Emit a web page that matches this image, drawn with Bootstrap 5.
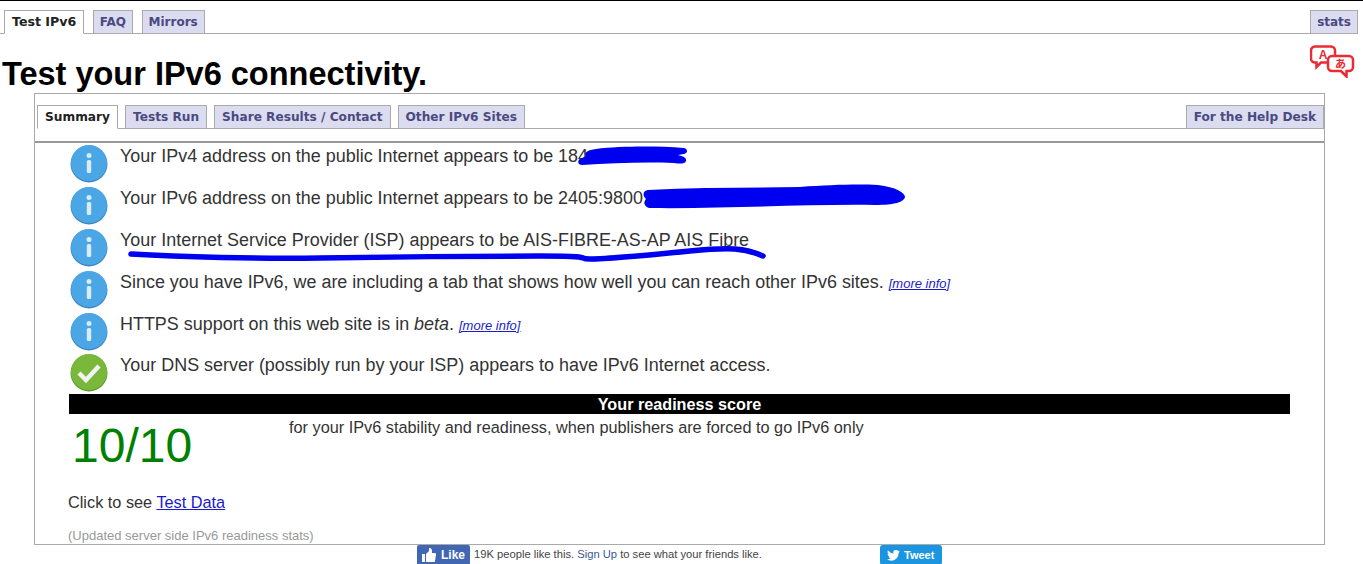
<!DOCTYPE html>
<html lang="en">
<head>
  <meta charset="UTF-8">
  <meta name="viewport" content="width=device-width, initial-scale=1.0">
  <title>Test your IPv6 connectivity</title>
  <link rel="stylesheet" href="https://cdn.jsdelivr.net/npm/bootstrap@5.3.0/dist/css/bootstrap.min.css">
  <style>
    html, body {
      height: 564px;
      overflow: hidden;
    }
    body {
      background: #fff;
      color: #222;
      font-family: "Liberation Sans", Arial, sans-serif;
      border-top: 1px solid #000;
    }
    .tabbar {
      display: flex;
      border-bottom: 1px solid #aaa;
      gap: 7px;
      padding: 0;
      flex-wrap: nowrap;
    }
    .tabbar .tab-item {
      display: block;
      height: 24px;
      margin-bottom: -1px;
      padding: 0 7px;
      border: 1px solid #aaa;
      background: #dcdcf0;
      color: #4a4a80;
      font: bold 12.15px/22px "DejaVu Sans", Verdana, sans-serif;
      text-decoration: none;
      white-space: nowrap;
    }
    .tabbar .tab-item.on {
      background: #fff;
      color: #222;
      border-bottom-color: #fff;
      font-size: 12.2px;
    }
    .top-tabs {
      margin: 9px 5px 0 0;
      padding-left: 4px;
      gap: 8.5px;
    }
    .top-tabs .tab-item {
      padding: 0 6px;
      font-size: 12px;
    }
    .top-tabs .tab-item.on {
      padding: 0 7px;
      font-size: 12.6px;
    }
    .head-row {
      height: 59px;
      position: relative;
    }
    .head-row h1 {
      margin: 0;
      padding: 22px 0 0 2px;
      font: bold 32.5px/36px "Liberation Sans", Arial, sans-serif;
      color: #000;
    }
    .lang-icon {
      position: absolute;
      left: 1310px;
      top: 11px;
    }
    .outer-box {
      margin: 0 38px 0 34px;
      height: 452px;
      border: 1px solid #aaa;
      position: relative;
    }
    .inner-tabs {
      margin: 11px 0 0 2px;
    }
    .result-list {
      margin-top: 12px;
      border-top: 2px solid #999;
      padding-top: 3px;
    }
    .result-row {
      display: flex;
      height: 42px;
      padding-left: 35px;
      font-size: 17.95px;
      line-height: 21px;
    }
    .result-row:nth-child(5) {
      height: 41px;
    }
    .result-row:last-child {
      height: 39px;
    }
    .result-row svg {
      flex: 0 0 38px;
      margin: -1px 12px 0 0;
    }
    .result-row .msg {
      white-space: nowrap;
      color: #333;
    }
    .more-link {
      font-size: 13px;
      font-style: italic;
      color: #1a1acc;
    }
    .score-bar {
      margin: 0 34px 0 34px;
      height: 20px;
      background: #000;
      color: #fff;
      text-align: center;
      font: bold 16.2px/20px "Liberation Sans", Arial, sans-serif;
    }
    .score-line {
      display: flex;
      height: 78px;
      padding-left: 37px;
    }
    .score-num {
      width: 217px;
      color: green;
      font-size: 48px;
      line-height: 64px;
    }
    .score-text {
      font-size: 16.3px;
      line-height: 26px;
      color: #333;
    }
    .data-line {
      padding-left: 33px;
      font-size: 16.3px;
      line-height: 20px;
      color: #333;
    }
    .data-line a {
      color: #1a1acc;
    }
    .stats-note {
      padding: 15px 0 0 33px;
      font-size: 13px;
      line-height: 18px;
      color: #999;
    }
    .ink {
      position: absolute;
      left: 0;
      top: 0;
      pointer-events: none;
    }
    .social-row {
      position: relative;
      height: 19px;
      font-size: 11.2px;
      color: #444;
      padding-left: 417px;
    }
    .like-btn {
      display: inline-flex;
      align-items: center;
      gap: 5px;
      width: 53px;
      height: 20px;
      padding-left: 5px;
      background: #4267b2;
      color: #fff;
      font-weight: bold;
      font-size: 12px;
      border-radius: 2px;
    }
    .like-text {
      margin-left: 4px;
    }
    .like-text a {
      color: #3b5998;
      text-decoration: none;
    }
    .tweet-btn {
      position: absolute;
      left: 880px;
      top: 0;
      display: inline-flex;
      align-items: center;
      gap: 4px;
      width: 62px;
      height: 20px;
      padding-left: 7px;
      background: #1b95e0;
      color: #fff;
      font-weight: bold;
      font-size: 11px;
      border-radius: 3px;
    }
  </style>
</head>
<body>
  <ul class="nav tabbar top-tabs">
    <li><a class="tab-item on" href="#">Test IPv6</a></li>
    <li><a class="tab-item" href="#">FAQ</a></li>
    <li><a class="tab-item" href="#">Mirrors</a></li>
    <li class="ms-auto"><a class="tab-item" href="#">stats</a></li>
  </ul>

  <div class="head-row">
    <h1>Test your IPv6 connectivity.</h1>
    <svg class="lang-icon" width="45" height="33" viewBox="0 0 45 33">
      <path d="M5 1.500h16a4 4 0 0 1 4 4v8a4 4 0 0 1-4 4H11l-4.500 4.500v-4.500H5a4 4 0 0 1-4-4v-8a4 4 0 0 1 4-4z" fill="#fff" stroke="#ea2a35" stroke-width="2.500"/>
      <text x="13" y="14" text-anchor="middle" font-family="Liberation Sans" font-size="12" font-weight="bold" fill="#ea2a35">A</text>
      <path d="M22 11h17a4 4 0 0 1 4 4v7a4 4 0 0 1-4 4h-2.500v5.500L31 26h-9a4 4 0 0 1-4-4v-7a4 4 0 0 1 4-4z" fill="#fff" stroke="#ea2a35" stroke-width="2.500"/>
      <text x="30.500" y="23" text-anchor="middle" font-family="Noto Sans CJK JP" font-size="11" font-weight="bold" fill="#ea2a35">あ</text>
    </svg>
  </div>

  <div class="outer-box">
    <ul class="nav tabbar inner-tabs">
      <li><a class="tab-item on" href="#">Summary</a></li>
      <li><a class="tab-item" href="#">Tests Run</a></li>
      <li><a class="tab-item" href="#">Share Results / Contact</a></li>
      <li><a class="tab-item" href="#">Other IPv6 Sites</a></li>
      <li class="ms-auto"><a class="tab-item" href="#">For the Help Desk</a></li>
    </ul>

    <div class="result-list">
      <div class="result-row">
        <svg width="38" height="38" viewBox="0 0 38 38"><use href="#info-ico"/></svg>
        <div class="msg">Your IPv4 address on the public Internet appears to be 184.</div>
      </div>
      <div class="result-row">
        <svg width="38" height="38" viewBox="0 0 38 38"><use href="#info-ico"/></svg>
        <div class="msg">Your IPv6 address on the public Internet appears to be 2405:9800:</div>
      </div>
      <div class="result-row">
        <svg width="38" height="38" viewBox="0 0 38 38"><use href="#info-ico"/></svg>
        <div class="msg">Your Internet Service Provider (ISP) appears to be AIS-FIBRE-AS-AP AIS Fibre</div>
      </div>
      <div class="result-row">
        <svg width="38" height="38" viewBox="0 0 38 38"><use href="#info-ico"/></svg>
        <div class="msg">Since you have IPv6, we are including a tab that shows how well you can reach other IPv6 sites. <a class="more-link" href="#">[more info]</a></div>
      </div>
      <div class="result-row">
        <svg width="38" height="38" viewBox="0 0 38 38"><use href="#info-ico"/></svg>
        <div class="msg">HTTPS support on this web site is in <i>beta</i>. <a class="more-link" href="#">[more info]</a></div>
      </div>
      <div class="result-row">
        <svg width="38" height="38" viewBox="0 0 38 38">
          <circle cx="19" cy="19" r="18.500" fill="#5f9a2e"/>
          <circle cx="19" cy="18" r="18" fill="#7ab83c"/>
          <path d="M9 19l7 7L29 12" fill="none" stroke="#f2f2f2" stroke-width="4.500"/>
        </svg>
        <div class="msg">Your DNS server (possibly run by your ISP) appears to have IPv6 Internet access.</div>
      </div>
    </div>

    <div class="score-bar">Your readiness score</div>
    <div class="score-line">
      <div class="score-num">10/10</div>
      <div class="score-text">for your IPv6 stability and readiness, when publishers are forced to go IPv6 only</div>
    </div>
    <div class="data-line">Click to see <a href="#">Test Data</a></div>
    <div class="stats-note">(Updated server side IPv6 readiness stats)</div>
  </div>

  <div class="social-row d-flex align-items-center">
    <span class="like-btn">
      <svg width="14" height="14" viewBox="0 0 14 14"><path d="M0 6h3v8H0zM4 6l3-3V0c2 0 3 1 3 3v2h3c1 0 1 1 1 2l-1 6c0 1-1 1-1 1H4z" fill="#fff"/></svg>
      Like
    </span>
    <span class="like-text">19K people like this. <a href="#">Sign Up</a> to see what your friends like.</span>
    <span class="tweet-btn">
      <svg width="13" height="11" viewBox="0 0 13 11"><path d="M13 1.300l-1.500.4L12.700.4l-1.600.6A2.600 2.600 0 0 0 6.500 3.400 7.400 7.400 0 0 1 1 .6a2.600 2.600 0 0 0 .8 3.500L.6 3.800c0 1.300.9 2.300 2.100 2.600l-1.200 0c.3 1 1.300 1.800 2.400 1.800A5.300 5.300 0 0 1 0 9.300 7.400 7.400 0 0 0 11.600 3z" fill="#fff"/></svg>
      Tweet
    </span>
  </div>

  <svg class="ink" width="1363" height="564" viewBox="0 0 1363 564">
    <g fill="#0000f0">
      <path d="M596 149c25-3 60-3 88-1 4 1 4 5 0 6l-6 1c5 1 9 3 8 6-1 3-6 3-12 2-30-1-62 0-92 2-4 0-5-4-2-6l6-3c-3-3 2-6 10-7z"/>
      <path d="M648 190c50-3 102-2 152-3 30-2 55-3 78-2 18 2 27 8 27 12-1 5-10 8-30 8-70-1-150 4-226 3-6-2-5-7-3-9-4-4-3-8 2-9z"/>
    </g>
    <path d="M131 254C180 257 260 259 320 258S480 256 540 256 575 259 590 259 650 255 690 251 745 248 763 256" fill="none" stroke="#0000f0" stroke-width="5.500" stroke-linecap="round" stroke-linejoin="round"/>
  </svg>

  <svg width="0" height="0" class="position-absolute">
    <symbol id="info-ico" viewBox="0 0 38 38">
      <circle cx="19" cy="19" r="18.500" fill="#3e86bf"/>
      <circle cx="19" cy="18" r="18" fill="#4ba6e6"/>
      <circle cx="19" cy="10.500" r="2.500" fill="#d9ecf9"/>
      <rect x="16.800" y="15" width="4.400" height="13" rx="1.500" fill="#d9ecf9"/>
    </symbol>
  </svg>

  <script src="https://cdn.jsdelivr.net/npm/bootstrap@5.3.0/dist/js/bootstrap.bundle.min.js"></script>
</body>
</html>
